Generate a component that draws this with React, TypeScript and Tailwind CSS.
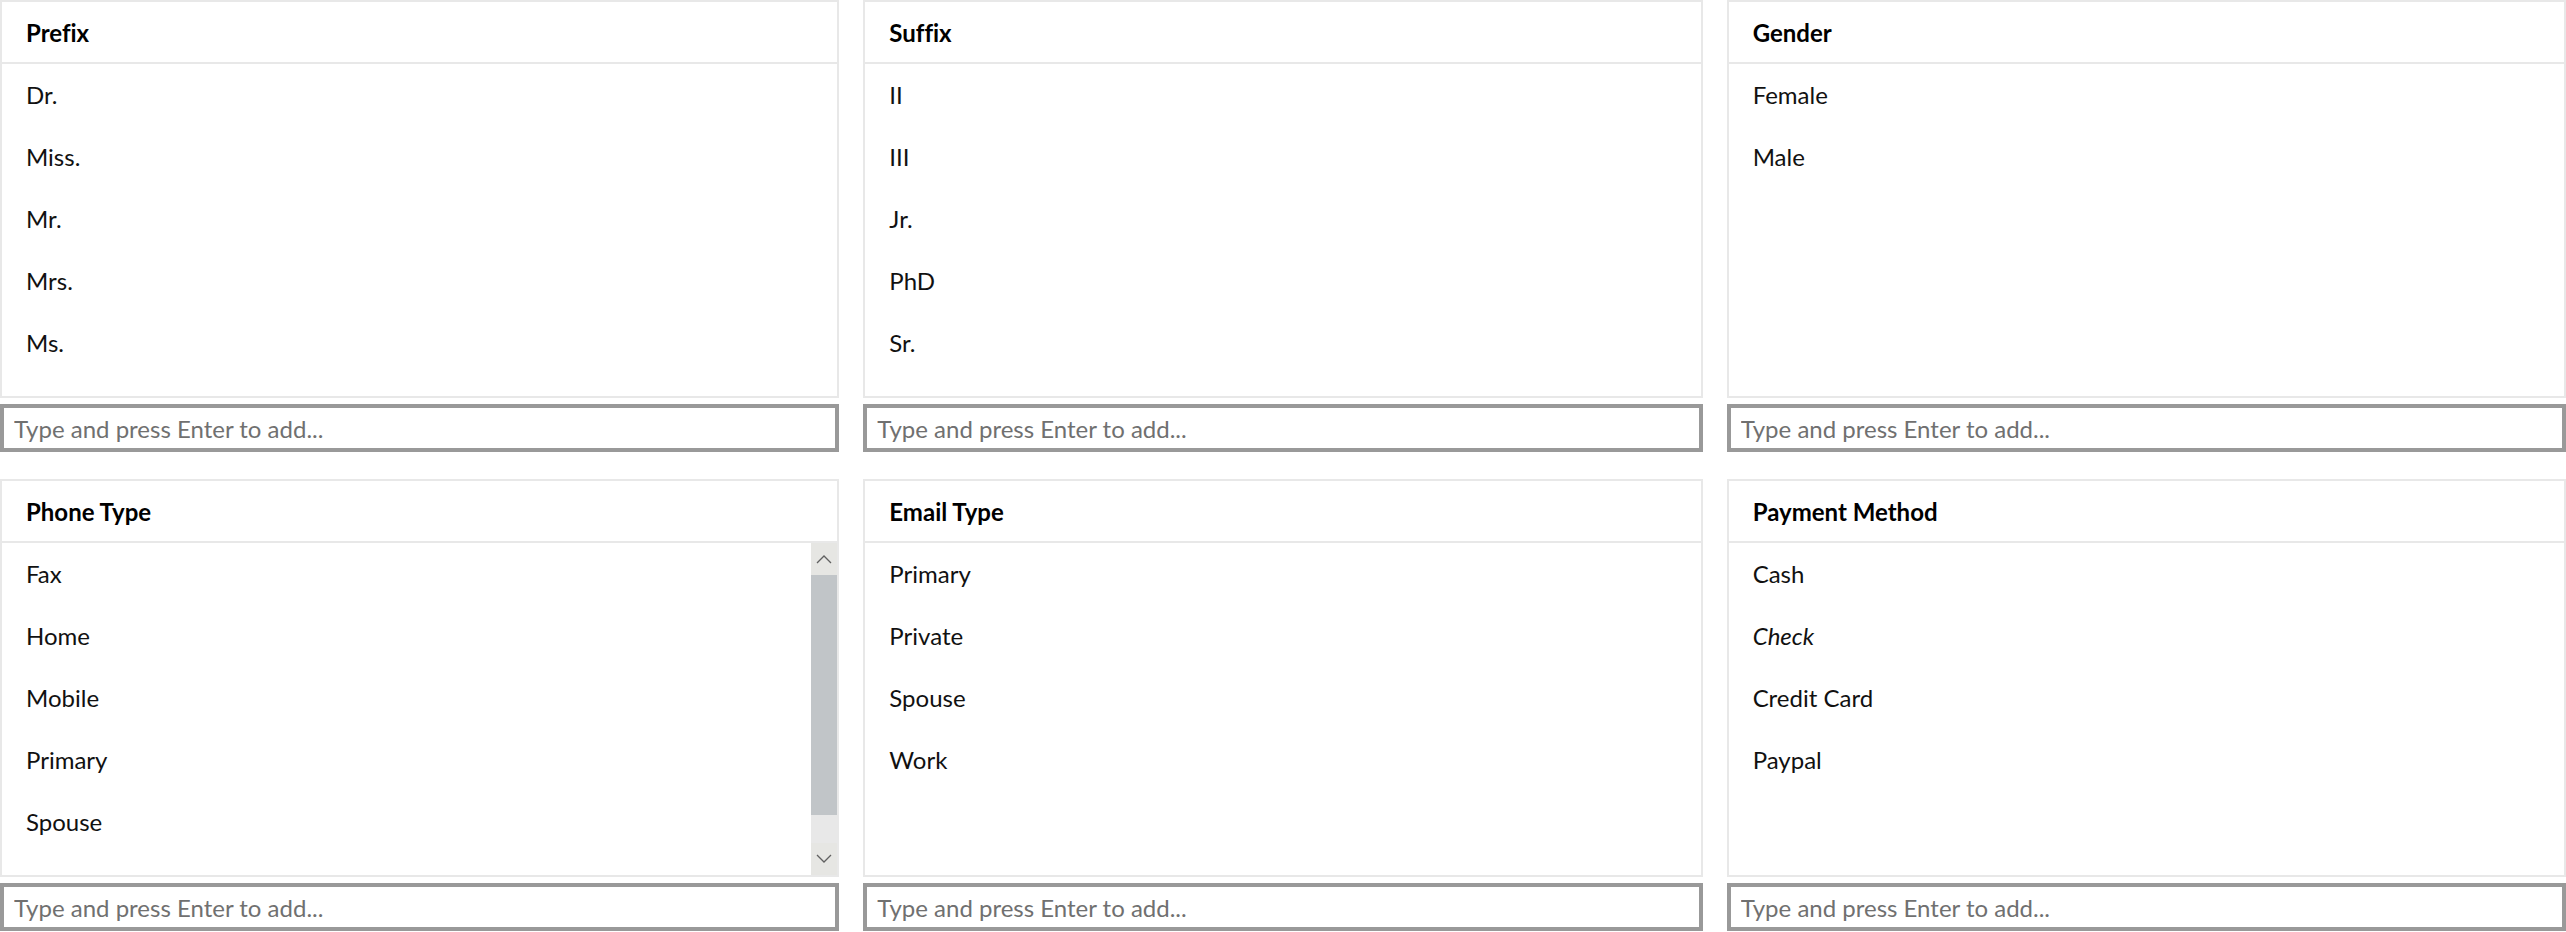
import React from "react";

type ListDef = { title: string; items: string[]; italic?: string[] };

const LISTS: ListDef[] = [
  { title: "Prefix", items: ["Dr.", "Miss.", "Mr.", "Mrs.", "Ms."] },
  { title: "Suffix", items: ["II", "III", "Jr.", "PhD", "Sr."] },
  { title: "Gender", items: ["Female", "Male"] },
  { title: "Phone Type", items: ["Fax", "Home", "Mobile", "Primary", "Spouse", "Work"] },
  { title: "Email Type", items: ["Primary", "Private", "Spouse", "Work"] },
  { title: "Payment Method", items: ["Cash", "Check", "Credit Card", "Paypal"], italic: ["Check"] },
];

// classic windows-like scrollbar, drawn as a column next to the list
function FakeScrollbar() {
  return (
    <div className="flex w-[26px] shrink-0 flex-col bg-[#e8e8e8]">
      <div className="flex h-[32px] items-center justify-center bg-[#e6e6e3]">
        <svg width="16" height="10" viewBox="0 0 16 10" fill="none">
          <path d="M1 9 L8 2 L15 9" stroke="#606060" strokeWidth="1.3" />
        </svg>
      </div>
      <div className="h-[240px] bg-[#c1c5c8]" />
      <div className="flex-1 bg-[#e8e8e8]" />
      <div className="flex h-[32px] items-center justify-center bg-[#e6e6e3]">
        <svg width="16" height="10" viewBox="0 0 16 10" fill="none">
          <path d="M1 1 L8 8 L15 1" stroke="#606060" strokeWidth="1.3" />
        </svg>
      </div>
    </div>
  );
}

function ListPanel({ def }: { def: ListDef }) {
  const overflow = def.items.length > 5;
  return (
    <div className="flex flex-col">
      <div className="flex h-[398px] flex-col border-2 border-[#e8e8e8] bg-white">
        {/* header */}
        <div className="flex h-[62px] shrink-0 items-center border-b-2 border-[#e8e8e8] px-6 pt-[2px] text-[24px] font-bold text-black">
          {def.title}
        </div>
        {/* items */}
        <div className="flex min-h-0 flex-1">
          <div className="min-w-0 flex-1 overflow-hidden">
            {def.items.map((it) => (
              <div
                key={it}
                className={`flex h-[62px] items-center px-6 text-[24px] text-[#111] ${
                  def.italic?.includes(it) ? "italic" : ""
                }`}
              >
                {it}
              </div>
            ))}
          </div>
          {overflow && <FakeScrollbar />}
        </div>
      </div>
      <input
        className="mt-[6px] h-[48px] w-full border-4 border-[#999] bg-white px-[10px] text-[24px] text-black outline-none placeholder:text-[#707070]"
        placeholder="Type and press Enter to add..."
      />
    </div>
  );
}

export default function App() {
  return (
    <div
      className="grid h-[932px] w-full grid-cols-3 gap-x-6 gap-y-[26px] bg-white [font-variant-ligatures:none]"
      style={{ fontFamily: 'Lato, "Noto Sans", Arial, sans-serif' }}
    >
      {LISTS.map((l) => (
        <ListPanel key={l.title} def={l} />
      ))}
    </div>
  );
}
